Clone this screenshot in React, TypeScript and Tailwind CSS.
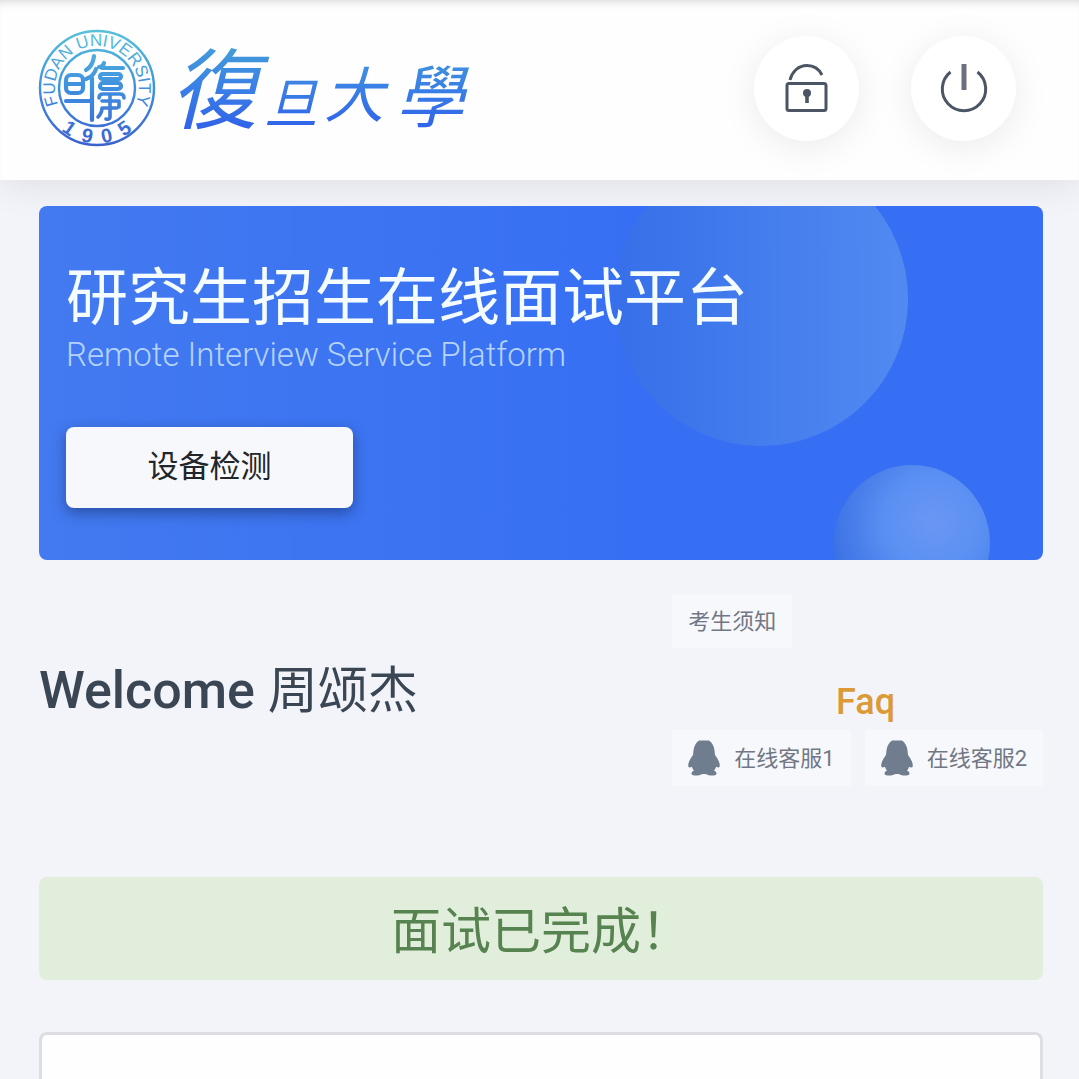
import type { ReactNode } from "react";

function Seal() {
  return (
    <svg viewBox="0 0 118 118" className="size-[118px] overflow-visible" role="img" aria-label="Fudan University seal">
      <defs>
        <linearGradient id="seal-ink" x1="0" y1="0" x2="0" y2="118" gradientUnits="userSpaceOnUse">
          <stop offset="0" stopColor="#57c3d8" />
          <stop offset="0.5" stopColor="#3f8fe0" />
          <stop offset="1" stopColor="#3b5fd0" />
        </linearGradient>
        <path id="seal-top" d="M21.300 77.400A42 42 0 1 1 96.700 77.400" />
        <path id="seal-bottom" d="M5 70A55 55 0 0 0 113 70" />
      </defs>
      <g fill="none" stroke="url(#seal-ink)">
        <circle cx="59" cy="59" r="57" strokeWidth="2.4" />
        <circle cx="59" cy="59" r="38" strokeWidth="2.4" />
        <g strokeWidth="4.2" strokeLinecap="round" strokeLinejoin="round">
          <rect x="28" y="46" width="17" height="18" rx="5" />
          <path d="M29 55H44M28 72H52" />
          <path d="M56 27Q55 37 48 41M58 40Q56 47 48 50M54 49V91" />
          <path d="M61 38Q65 38 66 34M64 39H85" />
          <rect x="62" y="45" width="21" height="5" rx="2.500" />
          <rect x="62" y="54" width="21" height="6" rx="3" />
          <path d="M61 69Q61 65 65 65H82Q86 65 86 69M64 72H81V78M72 65V88Q72 91 68 90M64 79Q64 84 60 88M65 79H79" strokeWidth="3.6" />
        </g>
      </g>
      <g fill="url(#seal-ink)" textAnchor="middle" fontFamily="Liberation Sans, sans-serif" fontWeight="700">
        <text fontSize="17" fontWeight="400">
          <textPath href="#seal-top" startOffset="50%">FUDAN UNIVERSITY</textPath>
        </text>
        <text fontSize="20">
          <textPath href="#seal-bottom" startOffset="50%">{"1\u00a0\u00a09\u00a0\u00a00\u00a0\u00a05"}</textPath>
        </text>
      </g>
    </svg>
  );
}

function Wordmark() {
  return (
    <svg viewBox="0 0 300 124" className="h-[124px] w-[300px] overflow-visible" role="img" aria-label="復旦大學">
      <defs>
        <linearGradient id="word-ink" x1="0" y1="10" x2="0" y2="112" gradientUnits="userSpaceOnUse">
          <stop offset="0" stopColor="#45a5d5" />
          <stop offset="0.5" stopColor="#3a80e6" />
          <stop offset="1" stopColor="#2f5cea" />
        </linearGradient>
      </defs>
      <g
        fill="url(#word-ink)"
        fontFamily="Noto Sans CJK TC, sans-serif"
        fontStyle="italic"
        fontWeight="400"
      >
        <text x="-2" y="96" fontSize="88">復</text>
        <text x="92" y="97" fontSize="54">旦</text>
        <text x="152" y="91" fontSize="60">大</text>
        <text x="224" y="96" fontSize="68">學</text>
      </g>
    </svg>
  );
}

function LockIcon() {
  return (
    <svg viewBox="0 0 48 48" className="size-12" fill="none" stroke="#4b5563" strokeWidth="3" aria-hidden="true">
      <rect x="4" y="19.500" width="39" height="27" rx="2" />
      <path d="M7 16C9 8 15 1.500 24 1.500C31 1.500 36 5 39 11" />
      <circle cx="24" cy="29" r="4" fill="#4b5563" stroke="none" />
      <path d="M24 29V39" strokeWidth="3.6" />
    </svg>
  );
}

function PowerIcon() {
  return (
    <svg viewBox="0 0 48 48" className="size-12 overflow-visible" fill="none" stroke="#4b5563" aria-hidden="true">
      <path d="M10.500 8A21.700 21.700 0 1 0 37.500 8" strokeWidth="3" />
      <path d="M24 0V26" stroke="#6b7080" strokeWidth="5" />
    </svg>
  );
}

function PenguinIcon() {
  return (
    <svg viewBox="0 0 32 36" className="h-9 w-8" fill="#6f7d8e" aria-hidden="true">
      <path d="M11 0.500H21C24.500 3 26 6.500 26.500 10.500L27 15C29.500 18.500 31.800 22 31.800 25.500C31.800 27.500 30.500 28 28 26.800C27.700 28.500 27 29.500 26 30.500C28 31.500 28.500 32.500 28.500 33.500C28.500 35 27 35.500 24 35.500C21 35.500 19 34.800 17.500 34H14.500C13 34.800 11 35.500 8 35.500C5 35.500 3.500 35 3.500 33.500C3.500 32.500 4 31.500 6 30.500C5 29.500 4.300 28.500 4 26.800C1.500 28 0.200 27.500 0.200 25.500C0.200 22 2.500 18.500 5 15L5.500 10.500C6 6.500 7.500 3 11 0.500Z" />
    </svg>
  );
}

function RoundButton({ label, children }: { label: string; children: ReactNode }) {
  return (
    <button
      type="button"
      aria-label={label}
      className="flex size-[105px] items-center justify-center rounded-full bg-white shadow-[0_6px_36px_rgba(0,0,0,0.08)]"
    >
      {children}
    </button>
  );
}

function ServiceLink({ label }: { label: string }) {
  return (
    <a href="#service" className="flex h-14 items-center gap-[14px] bg-[#f7f8fb] px-4 text-[22px] whitespace-nowrap">
      <PenguinIcon />
      {label}
    </a>
  );
}

export default function App() {
  return (
    <div className="flex min-h-screen flex-col bg-[#f3f4fa] font-['Roboto','Noto_Sans_CJK_SC',sans-serif]">
      <header className="relative flex items-center justify-between bg-[#fefefe] pt-[26px] pr-[63px] pb-[30px] pl-[38px] shadow-[0_4px_36px_rgba(0,0,0,0.09),inset_0_8px_8px_-6px_rgba(0,0,0,0.15)]">
        <div className="flex items-center gap-4">
          <Seal />
          <Wordmark />
        </div>
        <div className="flex gap-[52px]">
          <RoundButton label="解锁">
            <LockIcon />
          </RoundButton>
          <RoundButton label="退出">
            <PowerIcon />
          </RoundButton>
        </div>
      </header>

      <main className="flex flex-1 flex-col pt-[26px] pr-9 pl-[39px]">
        <section className="relative overflow-hidden rounded-lg bg-linear-to-r from-[#437af0] to-[#366ff3] to-60% px-[27px] pt-[60px] pb-[52px]">
          <div className="absolute -top-[54px] right-[135px] size-[294px] rounded-full bg-linear-to-r from-[#366fe8] to-[#528af2]" />
          <div className="absolute top-[259px] right-[53px] size-[156px] rounded-full bg-[radial-gradient(circle_at_64%_37%,#6a97f5,#5a8ff2_35%,#3369e0_85%)]" />
          <div className="relative">
            <h1 className="text-[62px] leading-[66px] text-[#f4fcff]">研究生招生在线面试平台</h1>
            <p className="text-[33px] leading-[46px] font-light text-[#b5d3fc]">Remote Interview Service Platform</p>
            <button
              type="button"
              className="mt-[49px] h-[81px] w-[287px] rounded-lg bg-[#f7f8fb] text-[31px] text-[#222529] shadow-[0_5px_14px_rgba(20,40,90,0.5)]"
            >
              设备检测
            </button>
          </div>
        </section>

        <section className="mt-[35px] flex items-center justify-between">
          <h2 className="text-[50px] leading-[60px] text-[#3a4653]">
            <span className="text-[52px] font-medium">Welcome </span>周颂杰
          </h2>
          <div className="flex flex-col text-[#717784]">
            <a href="#notice" className="flex h-[53px] items-center self-start bg-[#f7f8fb] px-4 text-[22px]">
              考生须知
            </a>
            <a href="#faq" className="mt-8 self-center pr-4 pl-8 text-[36px] leading-[44px] font-medium text-[#dc9a37]">
              Faq
            </a>
            <div className="mt-[6px] flex gap-[14px]">
              <ServiceLink label="在线客服1" />
              <ServiceLink label="在线客服2" />
            </div>
          </div>
        </section>

        <div role="status" className="mt-[91px] rounded-lg bg-[#e1eedb] pt-5 pb-3 text-center text-[50px] leading-[71px] text-[#56834f]">
          面试已完成！
        </div>

        <section className="mt-[52px] flex-1 rounded-t-lg border-3 border-b-0 border-[#dddee2] bg-[#fefefe]" />
      </main>
    </div>
  );
}
